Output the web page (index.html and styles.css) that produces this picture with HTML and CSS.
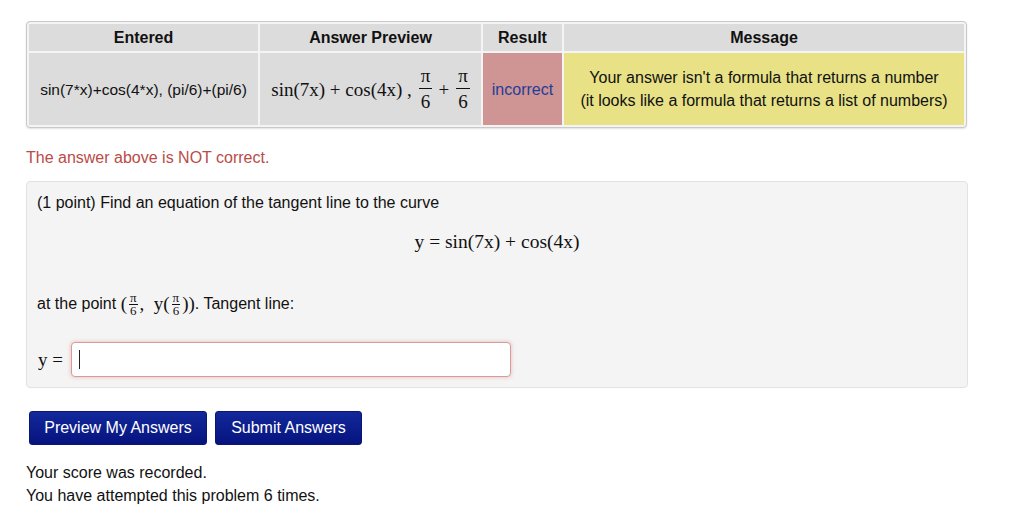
FILE: index.html
```html
<!DOCTYPE html>
<html>
<head>
<meta charset="utf-8">
<link rel="stylesheet" href="styles.css">
</head>
<body>
<div class="page">
  <table class="results">
    <thead>
      <tr>
        <th class="c-entered">Entered</th>
        <th class="c-preview">Answer Preview</th>
        <th class="c-result">Result</th>
        <th class="c-message">Message</th>
      </tr>
    </thead>
    <tbody>
      <tr>
        <td class="c-entered entered">sin(7*x)+cos(4*x), (pi/6)+(pi/6)</td>
        <td class="c-preview"><span class="math">sin(7x) + cos(4x) ,<span class="frac"><span class="num">π</span><span class="den">6</span></span>+<span class="frac"><span class="num">π</span><span class="den">6</span></span></span></td>
        <td class="c-result incorrect">incorrect</td>
        <td class="c-message">Your answer isn't a formula that returns a number<br>(it looks like a formula that returns a list of numbers)</td>
      </tr>
    </tbody>
  </table>

  <p class="not-correct">The answer above is NOT correct.</p>

  <div class="problem">
    <p class="line">(1 point) Find an equation of the tangent line to the curve</p>
    <div class="display-math">y = sin(7x) + cos(4x)</div>
    <p class="line point">at the point&nbsp;<span class="math-inline">(</span><span class="sfrac"><span class="snum">π</span><span class="sden">6</span></span><span class="math-inline">,&nbsp;&nbsp;y(</span><span class="sfrac"><span class="snum">π</span><span class="sden">6</span></span><span class="math-inline">))</span>. Tangent line:</p>
    <div class="answer-row">
      <span class="yeq">y =</span>
      <div class="answer-input"><span class="caret"></span></div>
    </div>
  </div>

  <div class="buttons">
    <button class="btn">Preview My Answers</button>
    <button class="btn">Submit Answers</button>
  </div>

  <div class="status">
    <p>Your score was recorded.</p>
    <p>You have attempted this problem 6 times.</p>
    <p>You received a score of 0% for this attempt.</p>
  </div>
</div>
</body>
</html>
```

FILE: styles.css
```css
html, body {
  margin: 0;
  padding: 0;
  background: #ffffff;
}

body {
  font-family: "Liberation Sans", Arial, sans-serif;
  font-size: 16px;
  color: #111;
}

.page {
  padding: 21px 57px 0 26px;
}

.results {
  width: 941px;
  border-collapse: separate;
  border-spacing: 2px;
  background: #f4f4f4;
  border: 1px solid #c9c9c9;
  border-radius: 4px;
  box-shadow: 0 1px 2px rgba(0,0,0,0.12);
  table-layout: fixed;
}

.results th,
.results td {
  background: #dcdcdc;
  text-align: center;
  vertical-align: middle;
  padding: 0;
}

.results th {
  height: 27px;
  font-weight: bold;
  font-size: 16px;
  line-height: 20px;
}

.results td {
  height: 72px;
  line-height: 23px;
  font-size: 15.5px;
}

.results td.entered {
  font-size: 15.5px;
}

.c-entered { width: 229px; }
.c-preview { width: 221px; }
.c-result { width: 79px; }

.results td.incorrect {
  background: #cf9494;
  color: #1f3e97;
  font-size: 16px;
}

.results td.c-message {
  background: #e8e186;
  font-size: 16px;
}

.math {
  font-family: "Liberation Serif", "Times New Roman", serif;
  font-size: 19px;
  display: inline-flex;
  align-items: center;
  white-space: nowrap;
}

.frac {
  display: inline-flex;
  flex-direction: column;
  align-items: center;
  margin: 0 6px 0 7px;
}

.frac .num {
  border-bottom: 1px solid #111;
  padding: 0 2px;
  line-height: 24px;
}

.frac .den {
  line-height: 26px;
}

.frac:last-child {
  margin-right: 0;
}

.not-correct {
  color: #b94c48;
  margin: 21px 0 0 0;
  line-height: 18px;
}

.problem {
  margin-top: 14px;
  width: 920px;
  background: #f4f4f4;
  border: 1px solid #e2e2e2;
  border-radius: 4px;
  padding: 11px 10px 10px 10px;
}

.line {
  margin: 0;
  line-height: 20px;
}

.display-math {
  font-family: "Liberation Serif", "Times New Roman", serif;
  font-size: 19.5px;
  text-align: center;
  margin-top: 19px;
  line-height: 20px;
}

.point {
  margin-top: 42px;
  display: flex;
  align-items: center;
  height: 20px;
}

.sfrac {
  display: inline-flex;
  flex-direction: column;
  align-items: center;
  font-family: "Liberation Serif", "Times New Roman", serif;
  font-size: 13px;
  line-height: 12px;
  margin: 0 2px;
}

.snum {
  border-bottom: 1px solid #111;
  padding: 0 1px;
}

.math-inline {
  font-family: "Liberation Serif", "Times New Roman", serif;
  font-size: 19px;
}

.answer-row {
  display: flex;
  align-items: center;
  margin-top: 28px;
}

.yeq {
  font-family: "Liberation Serif", "Times New Roman", serif;
  font-size: 19px;
  margin: 0 8px 0 1px;
}

.answer-input {
  width: 431px;
  height: 33px;
  background: #fff;
  border: 1px solid #d89a9a;
  border-radius: 4px;
  box-shadow: 0 0 4px rgba(200, 80, 80, 0.35);
  display: flex;
  align-items: center;
  padding-left: 7px;
}

.caret {
  width: 1px;
  height: 19px;
  background: #222;
}

.buttons {
  display: flex;
  gap: 8px;
  margin-top: 23px;
  padding-left: 3px;
}

.btn {
  font-family: "Liberation Sans", Arial, sans-serif;
  font-size: 16px;
  color: #fff;
  background: linear-gradient(#13289a, #06137f);
  border: 1px solid #0a1670;
  border-radius: 3px;
  height: 34px;
  padding: 0;
  cursor: pointer;
}

.btn:first-child {
  width: 178px;
}

.btn:last-child {
  width: 147px;
}

.status {
  margin-top: 16px;
}

.status p {
  margin: 0;
  line-height: 23px;
}
```
